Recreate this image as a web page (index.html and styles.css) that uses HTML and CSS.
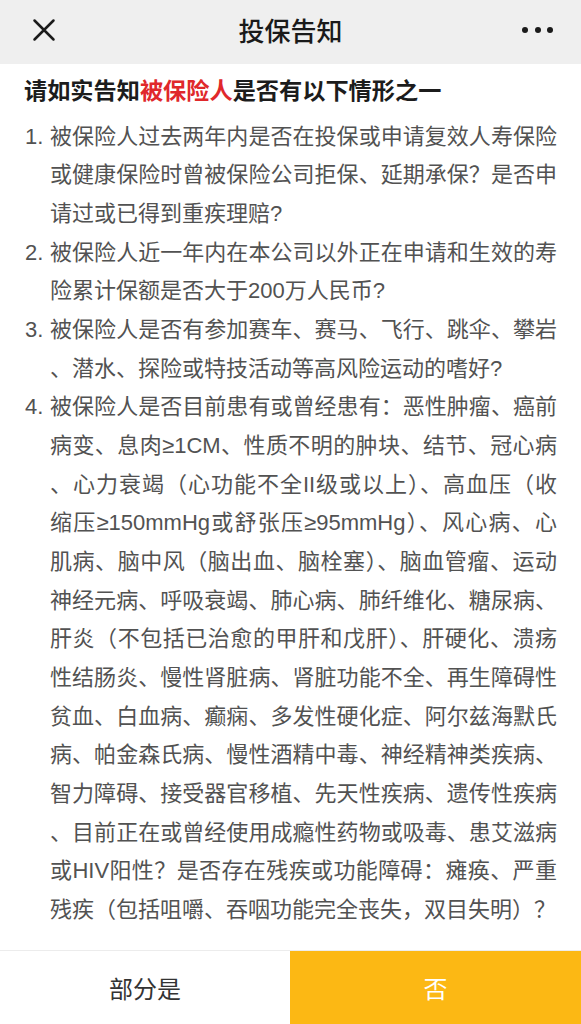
FILE: index.html
```html
<!DOCTYPE html>
<html lang="zh-CN">
<head>
<meta charset="utf-8">
<title>投保告知</title>
<link rel="stylesheet" href="styles.css">
</head>
<body>
<div class="app">
  <header class="nav">
    <button class="nav-close" aria-label="关闭">
      <svg viewBox="0 0 24 24" width="24" height="24"><path d="M2.5 2.5 L21.5 21.5 M21.5 2.5 L2.5 21.5" stroke="#1a1a1a" stroke-width="2.5" stroke-linecap="round" fill="none"/></svg>
    </button>
    <h1 class="nav-title">投保告知</h1>
    <button class="nav-more" aria-label="更多"><span></span><span></span><span></span></button>
  </header>

  <main class="content">
    <h2 class="notice-title">请如实告知<em>被保险人</em>是否有以下情形之一</h2>
    <ol class="questions">
      <li>
        <span class="num">1.</span>
        <p class="q">
          <span class="ln">被保险人过去两年内是否在投保或申请复效人寿保险</span>
          <span class="ln">或健康保险时曾被保险公司拒保、延期承保？是否申</span>
          <span class="ln end">请过或已得到重疾理赔?</span>
        </p>
      </li>
      <li>
        <span class="num">2.</span>
        <p class="q">
          <span class="ln">被保险人近一年内在本公司以外正在申请和生效的寿</span>
          <span class="ln end">险累计保额是否大于200万人民币?</span>
        </p>
      </li>
      <li>
        <span class="num">3.</span>
        <p class="q">
          <span class="ln">被保险人是否有参加赛车、赛马、飞行、跳伞、攀岩</span>
          <span class="ln end">、潜水、探险或特技活动等高风险运动的嗜好?</span>
        </p>
      </li>
      <li>
        <span class="num">4.</span>
        <p class="q">
          <span class="ln">被保险人是否目前患有或曾经患有：恶性肿瘤、癌前</span>
          <span class="ln">病变、息肉≥1CM、性质不明的肿块、结节、冠心病</span>
          <span class="ln">、心力衰竭（心功能不全II级或以上）、高血压（收</span>
          <span class="ln">缩压≥150mmHg或舒张压≥95mmHg）、风心病、心</span>
          <span class="ln">肌病、脑中风（脑出血、脑栓塞）、脑血管瘤、运动</span>
          <span class="ln">神经元病、呼吸衰竭、肺心病、肺纤维化、糖尿病、</span>
          <span class="ln">肝炎（不包括已治愈的甲肝和戊肝）、肝硬化、溃疡</span>
          <span class="ln">性结肠炎、慢性肾脏病、肾脏功能不全、再生障碍性</span>
          <span class="ln">贫血、白血病、癫痫、多发性硬化症、阿尔兹海默氏</span>
          <span class="ln">病、帕金森氏病、慢性酒精中毒、神经精神类疾病、</span>
          <span class="ln">智力障碍、接受器官移植、先天性疾病、遗传性疾病</span>
          <span class="ln">、目前正在或曾经使用成瘾性药物或吸毒、患艾滋病</span>
          <span class="ln">或HIV阳性？是否存在残疾或功能障碍：瘫痪、严重</span>
          <span class="ln end">残疾（包括咀嚼、吞咽功能完全丧失，双目失明）？</span>
        </p>
      </li>
    </ol>
  </main>

  <footer class="actions">
    <button class="btn btn-partial">部分是</button>
    <button class="btn btn-no">否</button>
  </footer>
</div>
</body>
</html>
```

FILE: styles.css
```css
html, body {
  margin: 0;
  padding: 0;
  background: #ffffff;
}

body {
  font-family: "Noto Sans CJK SC", "Noto Sans", sans-serif;
  color: #1a1a1a;
}

.app {
  width: 581px;
  height: 1024px;
  display: flex;
  flex-direction: column;
  overflow: hidden;
}

/* ---------- navigation bar ---------- */
.nav {
  height: 60px;
  padding-bottom: 4px;
  background: #efefef;
  display: grid;
  grid-template-columns: 1fr auto 1fr;
  align-items: center;
}

.nav button {
  border: 0;
  background: none;
  padding: 0;
  cursor: pointer;
}

.nav-close {
  justify-self: start;
  margin-left: 32px;
  width: 24px;
  height: 24px;
  display: flex;
}

.nav-title {
  margin: 0;
  font-size: 26px;
  font-weight: 500;
  line-height: 32px;
  color: #1a1a1a;
}

.nav-more {
  justify-self: end;
  margin-right: 28px;
  display: flex;
  gap: 6.5px;
  align-items: center;
}

.nav-more span {
  width: 6px;
  height: 6px;
  border-radius: 50%;
  background: #1a1a1a;
}

/* ---------- content ---------- */
.content {
  flex: 1;
  padding: 10px 24px 0 24px;
  overflow: hidden;
}

.notice-title {
  margin: 0;
  font-size: 23.2px;
  line-height: 30px;
  font-weight: 700;
  color: #1c1c1c;
}

.notice-title em {
  font-style: normal;
  color: #e0282b;
}

.questions {
  list-style: none;
  margin: 13.7px 0 0 0;
  padding: 0;
}

.questions li {
  display: grid;
  grid-template-columns: 26px 1fr;
  font-size: 22px;
  line-height: 38.65px;
  color: #525252;
}

.num {
  font-family: "Liberation Sans", "Noto Sans CJK SC", sans-serif;
  padding-left: 1px;
}

.q {
  margin: 0;
  font-family: "Liberation Sans", "Noto Sans CJK SC", sans-serif;
}

.ln {
  display: block;
  white-space: nowrap;
  text-align: justify;
  text-align-last: justify;
}

.ln.end {
  text-align-last: left;
}

/* ---------- bottom actions ---------- */
.actions {
  height: 74px;
  display: grid;
  grid-template-columns: 290px 1fr;
  border-top: 1px solid #ececec;
  box-sizing: border-box;
}

.btn {
  border: 0;
  margin: 0;
  font-family: "Noto Sans CJK SC", sans-serif;
  font-size: 24px;
  cursor: pointer;
}

.btn-partial {
  background: #ffffff;
  color: #333333;
}

.btn-no {
  background: #fcb814;
  color: #ffffff;
}
```
